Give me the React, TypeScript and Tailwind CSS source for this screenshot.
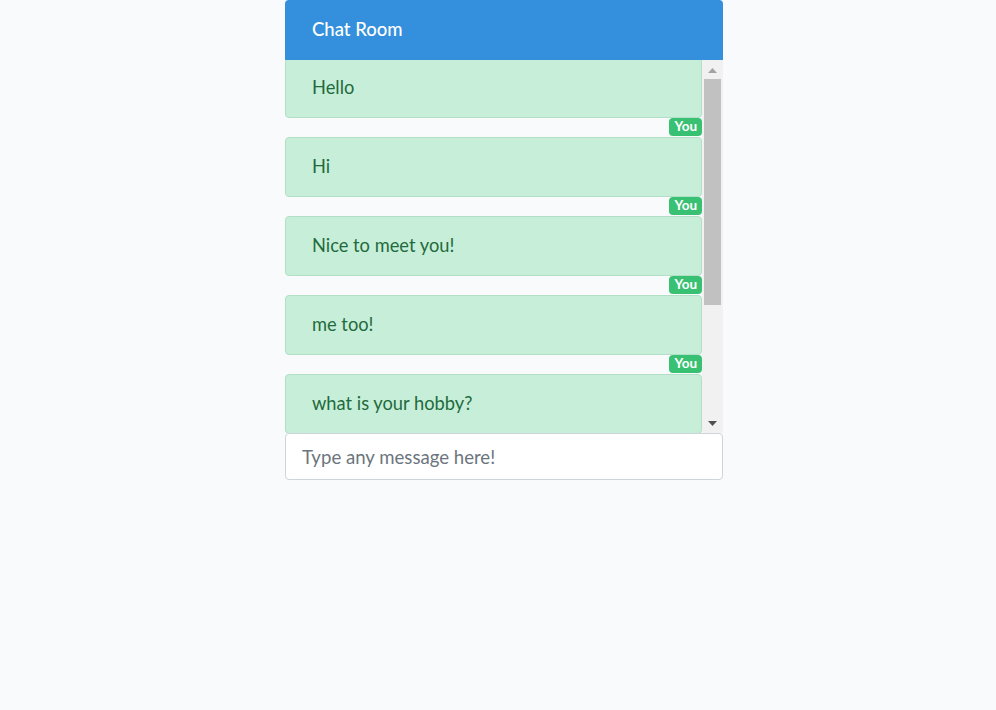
import { ReactNode } from "react";

interface Message {
  id: number;
  text: string;
  author: string;
}

const messages: Message[] = [
  { id: 1, text: "Hello", author: "You" },
  { id: 2, text: "Hi", author: "You" },
  { id: 3, text: "Nice to meet you!", author: "You" },
  { id: 4, text: "me too!", author: "You" },
  { id: 5, text: "what is your hobby?", author: "You" },
];

const MessageItem = ({ message }: { message: Message }) => {
  return (
    <li className="flex flex-col">
      <div className="h-[60px] flex items-center pl-[26px] bg-[#c7eed9] border border-[#b2dfc6] rounded-[4px] text-[#1f6b3c] text-[18.3px]">
        {message.text}
      </div>
      <div className="h-[19px] flex justify-end">
        <span className="h-[18px] px-[5px] flex items-center rounded-[4px] bg-[#38c172] text-white text-[13.5px] font-bold leading-none">
          {message.author}
        </span>
      </div>
    </li>
  );
};

const Scrollbar = ({ children }: { children?: ReactNode }) => {
  return (
    <div className="w-[21px] shrink-0 bg-[#f1f1f1] flex flex-col items-center">
      <div className="h-[19px] w-full flex items-center justify-center pt-[1px]">
        <svg width="9" height="5" viewBox="0 0 9 5">
          <path d="M4.5 0 L9 5 L0 5 Z" fill="#a3a3a3" />
        </svg>
      </div>
      <div className="w-[17px] h-[226px] bg-[#c1c1c1]" />
      <div className="flex-1" />
      <div className="h-[19px] w-full flex items-center justify-center pb-[1px]">
        <svg width="9" height="5" viewBox="0 0 9 5">
          <path d="M0 0 L9 0 L4.5 5 Z" fill="#505050" />
        </svg>
      </div>
      {children}
    </div>
  );
};

export default function App() {
  return (
    <div
      className="min-h-[710px] bg-[#f8fafc] pl-3"
      style={{ fontFamily: "Lato, 'Open Sans', sans-serif" }}
    >
      <div className="w-[438px] mx-auto flex flex-col">
        <div className="h-[60px] bg-[#3490dc] rounded-t-[4px] flex items-center pl-[27px] text-white text-[18.5px] font-medium">
          Chat Room
        </div>
        <div className="h-[373px] flex overflow-hidden">
          <ul className="flex-1 flex flex-col -mt-[2px]">
            {messages.map((m) => (
              <MessageItem key={m.id} message={m} />
            ))}
          </ul>
          <Scrollbar />
        </div>
        <input
          type="text"
          placeholder="Type any message here!"
          className="h-[47px] w-full bg-white border border-[#ced4da] rounded-[4px] px-4 text-[18.6px] text-[#495057] placeholder:text-[#6c757d] outline-none"
        />
      </div>
    </div>
  );
}
